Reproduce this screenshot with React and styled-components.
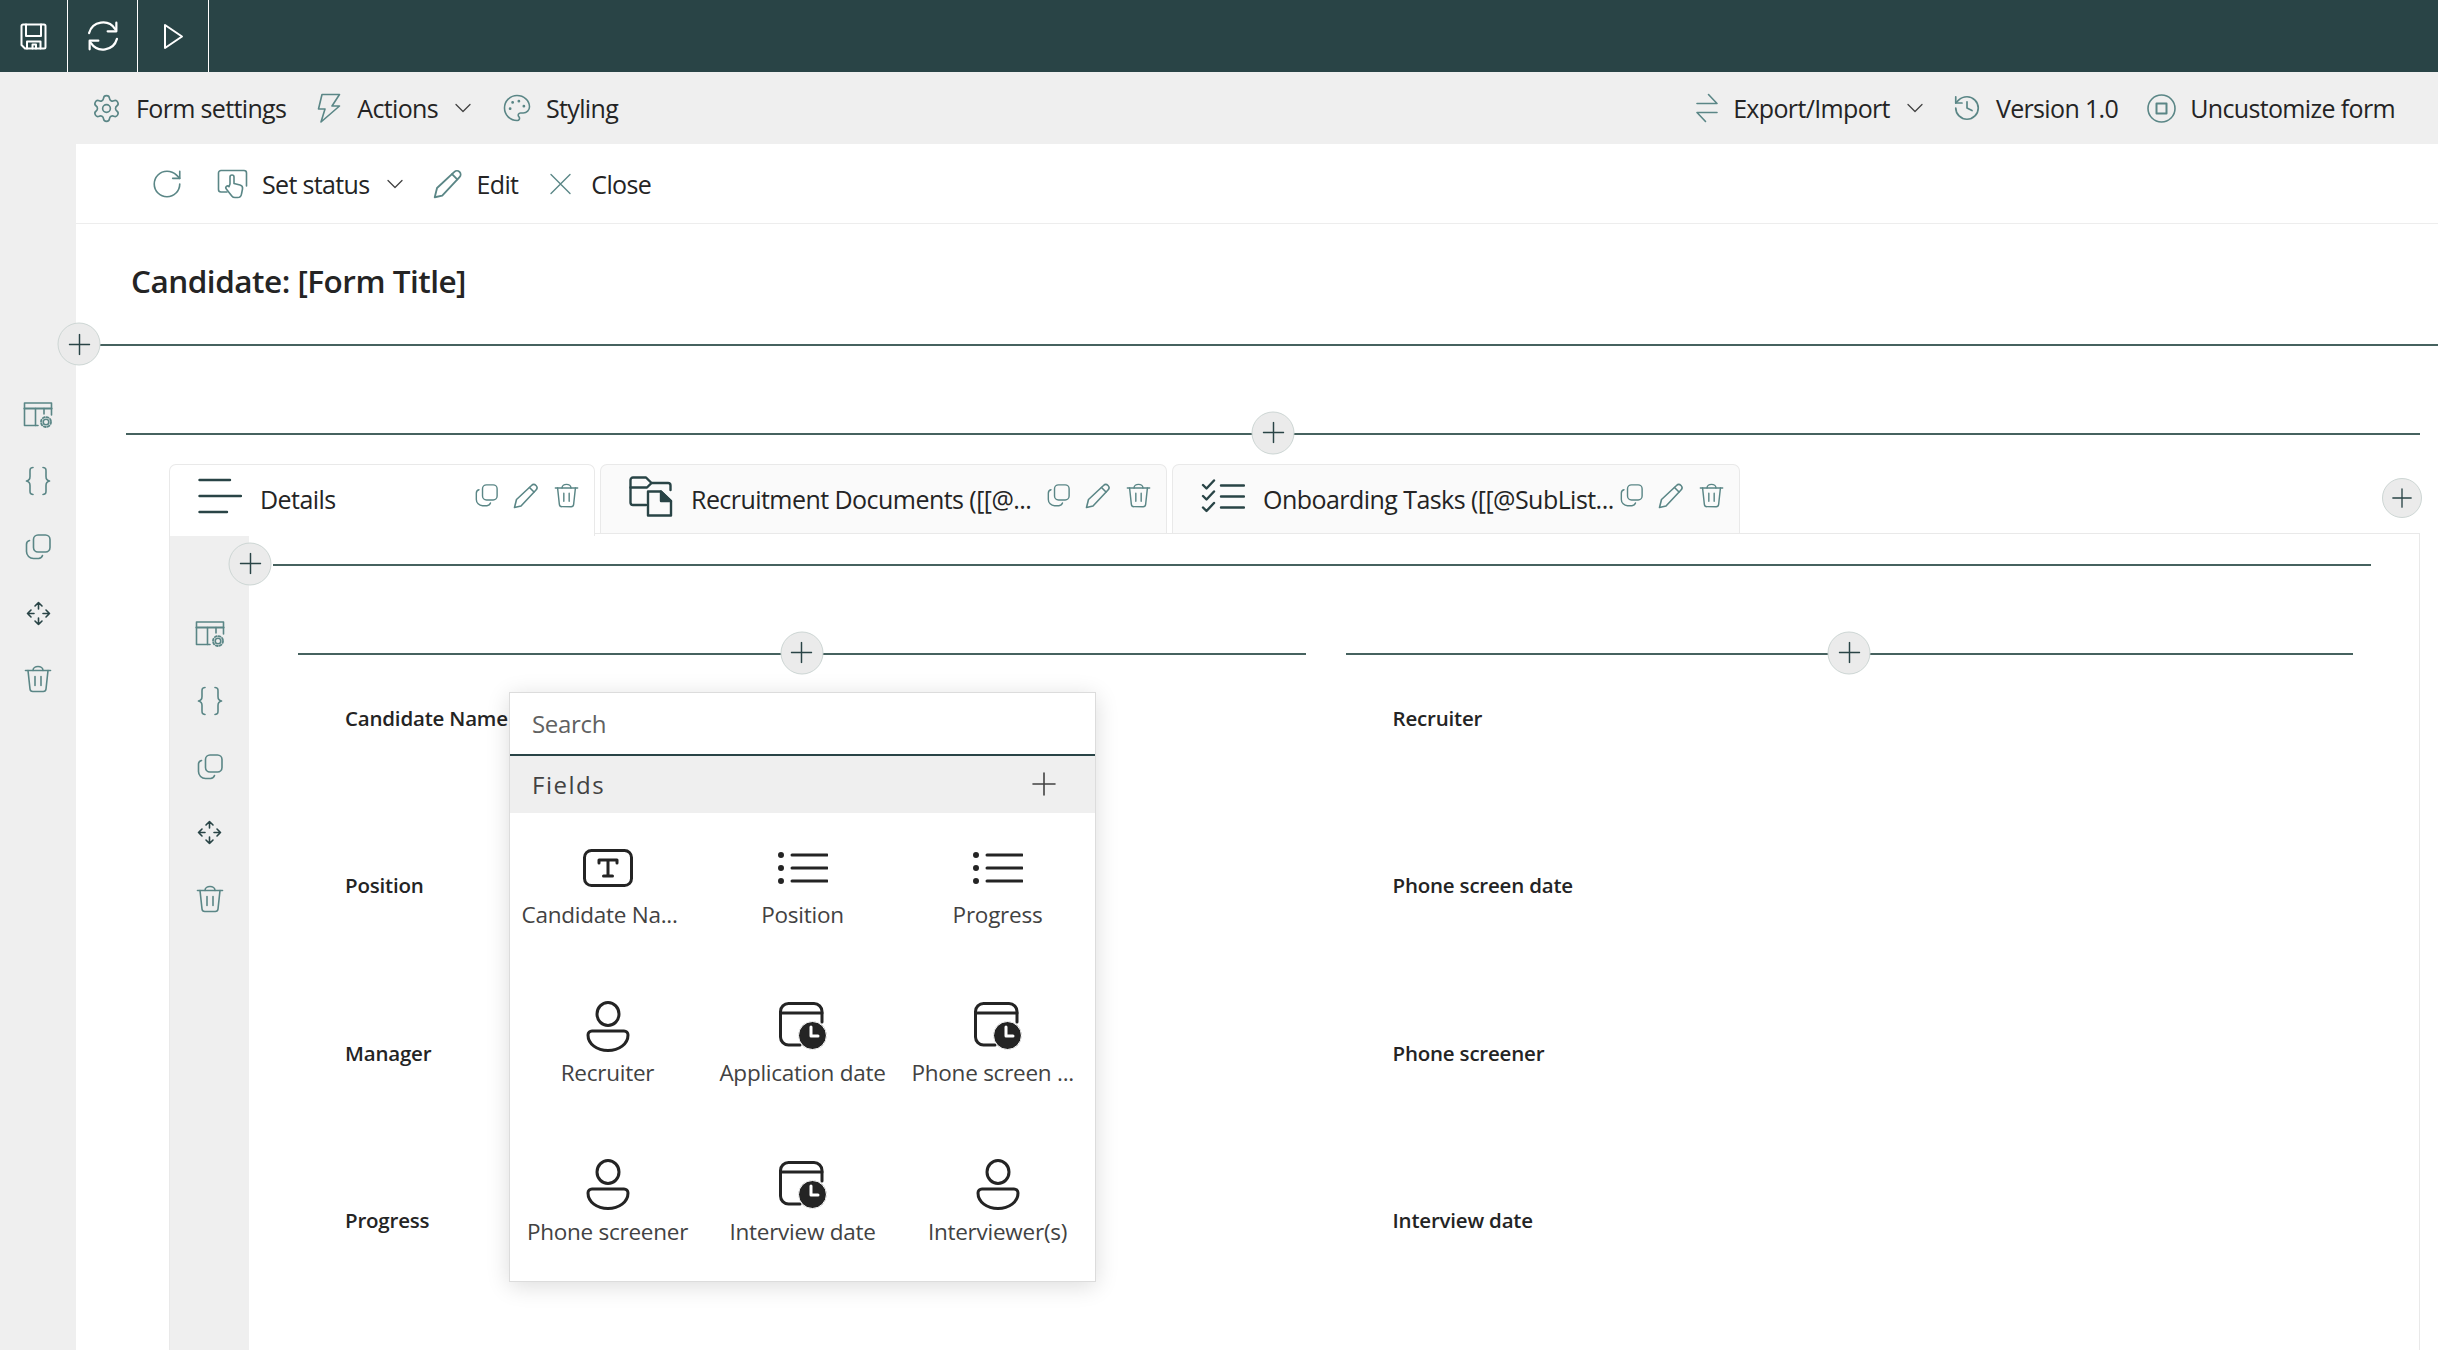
import React from "react";
import styled, { createGlobalStyle } from "styled-components";
import { Settings, Palette, History, RotateCw } from "lucide-react";

const DARK = "#294446";
const TEAL = "#5a8686";
const RAIL = "#efefef";

const GlobalStyle = createGlobalStyle`
  html, body {
    margin: 0;
    height: 100%;
    overflow: hidden;
    background: #ffffff;
  }
  #root {
    height: 100%;
  }
  * {
    box-sizing: border-box;
  }
`;

/* ================= PAGE ================= */

const Page = styled.div`
  height: 100%;
  display: flex;
  flex-direction: column;
  font-family: "Open Sans", "Noto Sans", sans-serif;
  color: #242424;
`;

const TopBar = styled.div`
  height: 72px;
  flex-shrink: 0;
  background: ${DARK};
  display: flex;
`;

const TopButton = styled.div`
  width: ${(p) => p.$width}px;
  display: flex;
  align-items: center;
  justify-content: center;
  border-right: 1.5px solid #ffffff;
`;

const SettingsBar = styled.div`
  height: 72px;
  flex-shrink: 0;
  background: ${RAIL};
  display: flex;
  align-items: center;
  justify-content: space-between;
  padding: 0 43px 0 91px;
`;

const ToolGroup = styled.div`
  display: flex;
  align-items: center;
  gap: ${(p) => p.$gap || 31}px;
`;

const ToolItem = styled.div`
  display: flex;
  align-items: center;
  gap: 14px;
  font-size: 25px;
  line-height: 32px;
  letter-spacing: -0.65px;
  white-space: nowrap;
`;

const Body = styled.div`
  flex: 1;
  min-height: 0;
  display: flex;
`;

const SideRail = styled.div`
  flex-shrink: 0;
  width: ${(p) => p.$width}px;
  padding-top: ${(p) => p.$top}px;
  background: ${RAIL};
  display: flex;
  flex-direction: column;
  align-items: center;
`;

const RailCell = styled.div`
  height: 66px;
  display: flex;
  align-items: center;
  justify-content: center;
`;

const Canvas = styled.div`
  flex: 1;
  min-width: 0;
  display: flex;
  flex-direction: column;
`;

const StatusBar = styled.div`
  height: 80px;
  flex-shrink: 0;
  padding-left: 74px;
  display: flex;
  align-items: center;
  gap: 30px;
  border-bottom: 1.5px solid #ededed;
`;

const RefreshButton = styled.div`
  display: flex;
  margin-right: 3px;
`;

const Title = styled.h1`
  margin: 0;
  height: 120px;
  flex-shrink: 0;
  padding: 37px 0 0 55px;
  font-size: 31.5px;
  line-height: 40px;
  font-weight: 600;
  letter-spacing: -0.5px;
  color: #242424;
`;

/* ================= ADD LINES ================= */

const AddLine = styled.div`
  position: relative;
  flex-shrink: 0;
  height: 2px;
  background: #46625f;
  margin: ${(p) => p.$margin || 0};
`;

const AddCircle = styled.div`
  position: absolute;
  top: 50%;
  left: ${(p) => p.$left};
  transform: translate(-50%, calc(-50% - 1px));
  width: 43px;
  height: 43px;
  border-radius: 50%;
  background: #ebebeb;
  border: 1px solid #cdd6d4;
  display: flex;
  align-items: center;
  justify-content: center;
`;

const Section = styled.div`
  flex: 1;
  min-height: 0;
  margin: 86.5px 18px 0 50px;
  display: flex;
  flex-direction: column;
`;

/* ================= TABS ================= */

const TabRow = styled.div`
  flex-shrink: 0;
  height: 69px;
  margin: 29px 0 0 43px;
  display: flex;
  gap: 5px;
`;

const Tab = styled.div`
  position: relative;
  z-index: 1;
  width: ${(p) => p.$width}px;
  height: ${(p) => (p.$active ? 72 : 69)}px;
  padding: 0 15px ${(p) => (p.$active ? 3 : 0)}px 28px;
  display: flex;
  align-items: center;
  background: ${(p) => (p.$active ? "#ffffff" : "#fafafa")};
  border: 1.5px solid #e9e9e9;
  border-bottom: none;
  border-radius: 7px 7px 0 0;
  font-size: 25px;
  letter-spacing: -0.55px;
  white-space: nowrap;
`;

const TabIcon = styled.div`
  width: 44px;
  flex-shrink: 0;
  margin-right: 18px;
  display: flex;
  align-items: center;
  padding-bottom: 5px;
`;

const TabLabel = styled.div`
  flex: 1;
  min-width: 0;
  overflow: hidden;
`;

const TabActions = styled.div`
  display: flex;
  align-items: center;
  gap: 15px;
  padding-bottom: 6px;
`;

const AddTab = styled(AddCircle)`
  position: static;
  transform: none;
  width: 40px;
  height: 40px;
  margin: 14px -2px 0 auto;
`;

const Panel = styled.div`
  flex: 1;
  min-height: 0;
  margin-left: 43px;
  border: 1.5px solid #e9e9e9;
  border-bottom: none;
  display: flex;
`;

const PanelBody = styled.div`
  flex: 1;
  min-width: 0;
`;

const Columns = styled.div`
  display: grid;
  grid-template-columns: 1fr 1fr;
  column-gap: 40px;
  padding: 87px 66px 0 49px;
`;

const Column = styled.div`
  position: relative;
`;

const FieldList = styled.div`
  padding: 49.5px 0 0 47px;
`;

const FieldRow = styled.div`
  height: 167.4px;
  font-size: 20.5px;
  line-height: 28px;
  font-weight: 600;
  letter-spacing: -0.2px;
  color: #242424;
`;

/* ================= FIELD PICKER ================= */

const Picker = styled.div`
  position: absolute;
  z-index: 2;
  left: 211px;
  top: 39px;
  width: 587px;
  height: 590px;
  background: #ffffff;
  border: 1px solid #dcdcdc;
  box-shadow: 0 4px 22px rgba(0, 0, 0, 0.14);
`;

const SearchRow = styled.div`
  height: 63px;
  padding: 0 22px;
  display: flex;
  align-items: center;
  font-size: 24px;
  letter-spacing: -0.3px;
  color: #616161;
  border-bottom: 2px solid ${DARK};
`;

const FieldsHeader = styled.div`
  height: 57px;
  padding: 0 39px 0 22px;
  display: flex;
  align-items: center;
  justify-content: space-between;
  background: ${RAIL};
  font-size: 24px;
  letter-spacing: 1.5px;
  color: #424242;
`;

const PickerGrid = styled.div`
  display: grid;
  grid-template-columns: repeat(3, 195px);
  grid-auto-rows: 158.5px;
`;

const PickerItem = styled.div`
  display: flex;
  flex-direction: column;
  align-items: center;
  padding-top: 29px;
  font-size: 22.5px;
  letter-spacing: -0.25px;
  color: #424242;
  white-space: nowrap;
`;

const PickerIcon = styled.div`
  height: 52px;
  display: flex;
  align-items: center;
  justify-content: center;
`;

const PickerText = styled.div`
  margin-top: 6px;
  line-height: 30px;
  width: ${(p) => (p.$clipped ? "172px" : "auto")};
`;

/* ================= ICONS ================= */

const Glyph = styled.svg`
  display: block;
  flex-shrink: 0;
  fill: none;
  stroke: ${(p) => p.$tone || TEAL};
  stroke-width: ${(p) => p.$line || 1.6};
  stroke-linecap: round;
  stroke-linejoin: round;
`;

const ChevronGlyph = styled(Glyph)`
  margin-left: 3px;
`;

const SaveIcon = () => (
  <Glyph width="27" height="27" viewBox="0 0 27 27" $tone="#fff" $line={2}>
    <path d="M3 1.5H24a1.500 1.500 0 0 1 1.500 1.500V24a1.500 1.500 0 0 1-1.500 1.500H5L1.500 22V3A1.500 1.500 0 0 1 3 1.500Z" />
    <path d="M6 1.500V13H21V1.500" />
    <path d="M7 25.500V18.500H20.500V25.500M12.500 25.500V21.500H16V25.500" />
  </Glyph>
);

const SyncIcon = () => (
  <Glyph width="36" height="36" viewBox="0 0 31 31" $tone="#fff" $line={1.900}>
    <path d="M3.500 13A12.500 12.500 0 0 1 26 9.500" />
    <path d="M27 4V11.500H19.500" />
    <path d="M27.500 18A12.500 12.500 0 0 1 5 21.500" />
    <path d="M4 27V19.500H11.500" />
  </Glyph>
);

const PlayIcon = () => (
  <Glyph width="21" height="27" viewBox="0 0 21 27" $tone="#fff" $line={2}>
    <path d="M2 2L19 13.5L2 25Z" />
  </Glyph>
);

const BoltIcon = () => (
  <Glyph width="26" height="30" viewBox="0 0 26 30">
    <path d="M5 1.5H22.5L15 13H22.5L4 29L8 16H1.5Z" />
  </Glyph>
);

const Chevron = () => (
  <ChevronGlyph width="16" height="10" viewBox="0 0 16 10" $tone="#424242" $line={1.3}>
    <path d="M1 1.5L8 8.5L15 1.5" />
  </ChevronGlyph>
);

const SwapIcon = () => (
  <Glyph width="24" height="30" viewBox="0 0 24 30">
    <path d="M2 10.5H22L13.5 1.5" />
    <path d="M22 19.5H2L10.5 28.5" />
  </Glyph>
);

const UncustomizeIcon = () => (
  <Glyph width="29" height="29" viewBox="0 0 29 29">
    <circle cx="14.5" cy="14.5" r="13.5" />
    <rect x="9.5" y="9.5" width="10" height="10" strokeWidth="2" />
  </Glyph>
);

const StatusIcon = () => (
  <Glyph width="31" height="30" viewBox="0 0 31 30">
    <path d="M10 23H4a2.5 2.5 0 0 1-2.5-2.500V4A2.500 2.500 0 0 1 4 1.500H27A2.500 2.500 0 0 1 29.500 4V17" />
    <path d="M13 15V8a2 2 0 0 1 4 0V14.500L23 16a3.500 3.500 0 0 1 2.500 4L24.500 25a4 4 0 0 1-4 3.500H18a4 4 0 0 1-3.200-1.600L9.300 20a1.800 1.800 0 0 1 2.700-2.400Z" />
  </Glyph>
);

const PencilIcon = ({ size = 26 }) => (
  <Glyph width={size} height={size} viewBox="0 0 26 26">
    <path d="M1.500 24.500L3.500 16.500L18.500 2.500a3.200 3.200 0 0 1 4.500 0a3.200 3.200 0 0 1 0 4.500L8 23Z" />
    <path d="M16.500 4.500L21 9" />
  </Glyph>
);

const CloseIcon = () => (
  <Glyph width="29" height="22" viewBox="0 0 29 22" $line={1.4}>
    <path d="M3 1.500L22 20.500M22 1.500L3 20.500" />
  </Glyph>
);

const PlusIcon = ({ size = 22, tone = DARK }) => (
  <Glyph width={size} height={size} viewBox="0 0 24 24" $tone={tone} $line={1.6}>
    <path d="M12 1V23M1 12H23" />
  </Glyph>
);

const TableIcon = () => (
  <Glyph width="30" height="27" viewBox="0 0 30 27">
    <path d="M15 23.500H1.500V1H28.500V13" />
    <path d="M1.500 6.500H28.500" strokeWidth="2.200" />
    <path d="M12.500 6.500V23.500M21 6.500V12" />
    <circle cx="23" cy="20" r="2.800" />
    <circle cx="23" cy="20" r="5" strokeDasharray="2 1.930" strokeWidth="1.800" />
  </Glyph>
);

const BracesIcon = () => (
  <Glyph width="26" height="30" viewBox="0 0 26 30">
    <path d="M8 1.500C4.500 1.500 5 4 5 7V10.500C5 13 4 14.500 1.500 15C4 15.500 5 17 5 19.500V23C5 26 4.500 28.500 8 28.500" />
    <path d="M18 1.500C21.500 1.500 21 4 21 7V10.500C21 13 22 14.500 24.500 15C22 15.500 21 17 21 19.500V23C21 26 21.500 28.500 18 28.500" />
  </Glyph>
);

const CopyIcon = ({ size = 26, tone }) => (
  <Glyph width={size} height={size} viewBox="0 0 26 26" $tone={tone}>
    <rect x="8.500" y="1" width="16.500" height="17" rx="4.500" />
    <path d="M4.500 6.500A4 4 0 0 0 1.500 10.500V17.500A7 7 0 0 0 8.500 24.500H13.500A4.500 4.500 0 0 0 17.500 21.500" />
  </Glyph>
);

const MoveIcon = () => (
  <Glyph width="25" height="25" viewBox="0 0 25 25" $tone={DARK}>
    <path d="M12.500 1.500V8M9 5L12.500 1.500L16 5" />
    <path d="M12.500 23.500V17M9 20L12.500 23.500L16 20" />
    <path d="M1.500 12.500H8M5 9L1.500 12.500L5 16" />
    <path d="M23.500 12.500H17M20 9L23.500 12.500L20 16" />
  </Glyph>
);

const TrashIcon = ({ size = 28 }) => (
  <Glyph width={size} height={size} viewBox="0 0 28 28">
    <path d="M1.500 5.500H26.500" />
    <path d="M9 5.500a5 4 0 0 1 10 0" />
    <path d="M4 5.500L6 24a2.800 2.800 0 0 0 2.800 2.500H19.200A2.800 2.800 0 0 0 22 24L24 5.500" />
    <path d="M11 11.500V20.500M17 11.500V20.500" />
  </Glyph>
);

const DetailsIcon = () => (
  <Glyph width="44" height="36" viewBox="0 0 44 36" $tone={DARK} $line={2.400}>
    <path d="M1.500 2H32M1.500 18H43M1.500 34H29" />
  </Glyph>
);

const FolderDocIcon = () => (
  <Glyph width="44" height="41" viewBox="0 0 44 41" $tone={DARK} $line={2.400}>
    <path d="M17 29H4a2.500 2.500 0 0 1-2.500-2.500V4A2.500 2.500 0 0 1 4 1.500H17L22.500 7H39a2.500 2.500 0 0 1 2.500 2.500V14" />
    <path d="M1.500 11.500H18L22.500 7" />
    <path d="M19 39.500V15.500H32L42 25V39.500Z" />
    <path d="M32 15.500V25H42Z" fill={DARK} />
  </Glyph>
);

const ChecklistIcon = () => (
  <Glyph width="44" height="34" viewBox="0 0 44 34" $tone={DARK} $line={2.400}>
    <path d="M2 6L5.500 9.500L13 1.500M2 17L5.500 20.500L13 12.500M2 28.500L5.500 32L13 24" />
    <path d="M20 6.500H43M20 17.500H43M20 28.500H43" />
  </Glyph>
);

const TextFieldIcon = () => (
  <Glyph width="50" height="38" viewBox="0 0 50 38" $tone="#242424" $line={3}>
    <rect x="1.500" y="1.500" width="47" height="35" rx="7" />
    <path d="M16 14V11H34V14M25 11V27M20.500 27H29.500" />
  </Glyph>
);

const ListFieldIcon = () => (
  <Glyph width="50" height="32" viewBox="0 0 50 32" $tone="#242424" $line={3}>
    <circle cx="3" cy="3" r="1.500" fill="#242424" />
    <circle cx="3" cy="16" r="1.500" fill="#242424" />
    <circle cx="3" cy="29" r="1.500" fill="#242424" />
    <path d="M14 3H49M14 16H49M14 29H49" />
  </Glyph>
);

const PersonIcon = () => (
  <Glyph width="44" height="51" viewBox="0 0 44 51" $tone="#242424" $line={3}>
    <ellipse cx="22" cy="13" rx="11" ry="11.500" />
    <path d="M6 30H38a4 4 0 0 1 4 4C42 43 33 49.500 22 49.500C11 49.500 2 43 2 34a4 4 0 0 1 4-4Z" />
  </Glyph>
);

const DateIcon = () => (
  <Glyph width="48" height="48" viewBox="0 0 48 48" $tone="#242424" $line={3}>
    <path d="M21 43H9.500A8 8 0 0 1 1.500 35V9.500A8 8 0 0 1 9.500 1.500H35A8 8 0 0 1 43 9.500V20" />
    <path d="M1.500 11H43" />
    <circle cx="33.500" cy="33.500" r="14" fill="#242424" stroke="#fff" strokeWidth="1" />
    <path d="M32 25V34H39" stroke="#fff" strokeWidth="3" />
  </Glyph>
);

/* ================= DATA ================= */

const tools = [<TableIcon />, <BracesIcon />, <CopyIcon />, <MoveIcon />, <TrashIcon />];

const tabs = [
  { label: "Details", icon: <DetailsIcon />, width: 426, active: true },
  { label: "Recruitment Documents ([[@...", icon: <FolderDocIcon />, width: 567 },
  { label: "Onboarding Tasks ([[@SubList...", icon: <ChecklistIcon />, width: 568 },
];

const leftFields = ["Candidate Name", "Position", "Manager", "Progress"];
const rightFields = ["Recruiter", "Phone screen date", "Phone screener", "Interview date"];

const pickerItems = [
  { label: "Candidate Na...", icon: <TextFieldIcon />, clipped: true },
  { label: "Position", icon: <ListFieldIcon /> },
  { label: "Progress", icon: <ListFieldIcon /> },
  { label: "Recruiter", icon: <PersonIcon /> },
  { label: "Application date", icon: <DateIcon /> },
  { label: "Phone screen ...", icon: <DateIcon />, clipped: true },
  { label: "Phone screener", icon: <PersonIcon /> },
  { label: "Interview date", icon: <DateIcon /> },
  { label: "Interviewer(s)", icon: <PersonIcon /> },
];

/* ================= COMPONENT ================= */

const Rail = ({ width, top }) => (
  <SideRail $width={width} $top={top}>
    {tools.map((icon, i) => (
      <RailCell key={i}>{icon}</RailCell>
    ))}
  </SideRail>
);

const App = () => {
  return (
    <Page>
      <GlobalStyle />
      <TopBar>
        <TopButton $width={68}>
          <SaveIcon />
        </TopButton>
        <TopButton $width={70}>
          <SyncIcon />
        </TopButton>
        <TopButton $width={71}>
          <PlayIcon />
        </TopButton>
      </TopBar>

      <SettingsBar>
        <ToolGroup>
          <ToolItem>
            <Settings size={31} color={TEAL} strokeWidth={1.25} />
            Form settings
          </ToolItem>
          <ToolItem>
            <BoltIcon />
            Actions
            <Chevron />
          </ToolItem>
          <ToolItem>
            <Palette size={30} color={TEAL} strokeWidth={1.25} />
            Styling
          </ToolItem>
        </ToolGroup>
        <ToolGroup $gap={29}>
          <ToolItem>
            <SwapIcon />
            Export/Import
            <Chevron />
          </ToolItem>
          <ToolItem>
            <History size={30} color={TEAL} strokeWidth={1.35} />
            Version 1.0
          </ToolItem>
          <ToolItem>
            <UncustomizeIcon />
            Uncustomize form
          </ToolItem>
        </ToolGroup>
      </SettingsBar>

      <Body>
        <Rail width={76} top={238} />
        <Canvas>
          <StatusBar>
            <RefreshButton>
              <RotateCw size={34} color={TEAL} strokeWidth={1.15} />
            </RefreshButton>
            <ToolItem>
              <StatusIcon />
              Set status
              <Chevron />
            </ToolItem>
            <ToolItem>
              <PencilIcon size={30} />
              Edit
            </ToolItem>
            <ToolItem>
              <CloseIcon />
              Close
            </ToolItem>
          </StatusBar>

          <Title>Candidate: [Form Title]</Title>

          <AddLine $margin="0 0 0 24px">
            <AddCircle $left="-21px">
              <PlusIcon />
            </AddCircle>
          </AddLine>

          <Section>
            <AddLine>
              <AddCircle $left="50%">
                <PlusIcon />
              </AddCircle>
            </AddLine>

            <TabRow>
              {tabs.map((tab) => (
                <Tab key={tab.label} $width={tab.width} $active={tab.active}>
                  <TabIcon>{tab.icon}</TabIcon>
                  <TabLabel>{tab.label}</TabLabel>
                  <TabActions>
                    <CopyIcon size={23} />
                    <PencilIcon size={26} />
                    <TrashIcon size={25} />
                  </TabActions>
                </Tab>
              ))}
              <AddTab $left="0">
                <PlusIcon size={20} />
              </AddTab>
            </TabRow>

            <Panel>
              <Rail width={79} top={68} />
              <PanelBody>
                <AddLine $margin="30px 48px 0 24px">
                  <AddCircle $left="-23px">
                    <PlusIcon />
                  </AddCircle>
                </AddLine>

                <Columns>
                  <Column>
                    <AddLine>
                      <AddCircle $left="50%">
                        <PlusIcon />
                      </AddCircle>
                    </AddLine>
                    <FieldList>
                      {leftFields.map((name) => (
                        <FieldRow key={name}>{name}</FieldRow>
                      ))}
                    </FieldList>

                    <Picker>
                      <SearchRow>Search</SearchRow>
                      <FieldsHeader>
                        Fields
                        <PlusIcon size={24} tone="#424242" />
                      </FieldsHeader>
                      <PickerGrid>
                        {pickerItems.map((item) => (
                          <PickerItem key={item.label}>
                            <PickerIcon>{item.icon}</PickerIcon>
                            <PickerText $clipped={item.clipped}>{item.label}</PickerText>
                          </PickerItem>
                        ))}
                      </PickerGrid>
                    </Picker>
                  </Column>

                  <Column>
                    <AddLine>
                      <AddCircle $left="50%">
                        <PlusIcon />
                      </AddCircle>
                    </AddLine>
                    <FieldList>
                      {rightFields.map((name) => (
                        <FieldRow key={name}>{name}</FieldRow>
                      ))}
                    </FieldList>
                  </Column>
                </Columns>
              </PanelBody>
            </Panel>
          </Section>
        </Canvas>
      </Body>
    </Page>
  );
};

export default App;
